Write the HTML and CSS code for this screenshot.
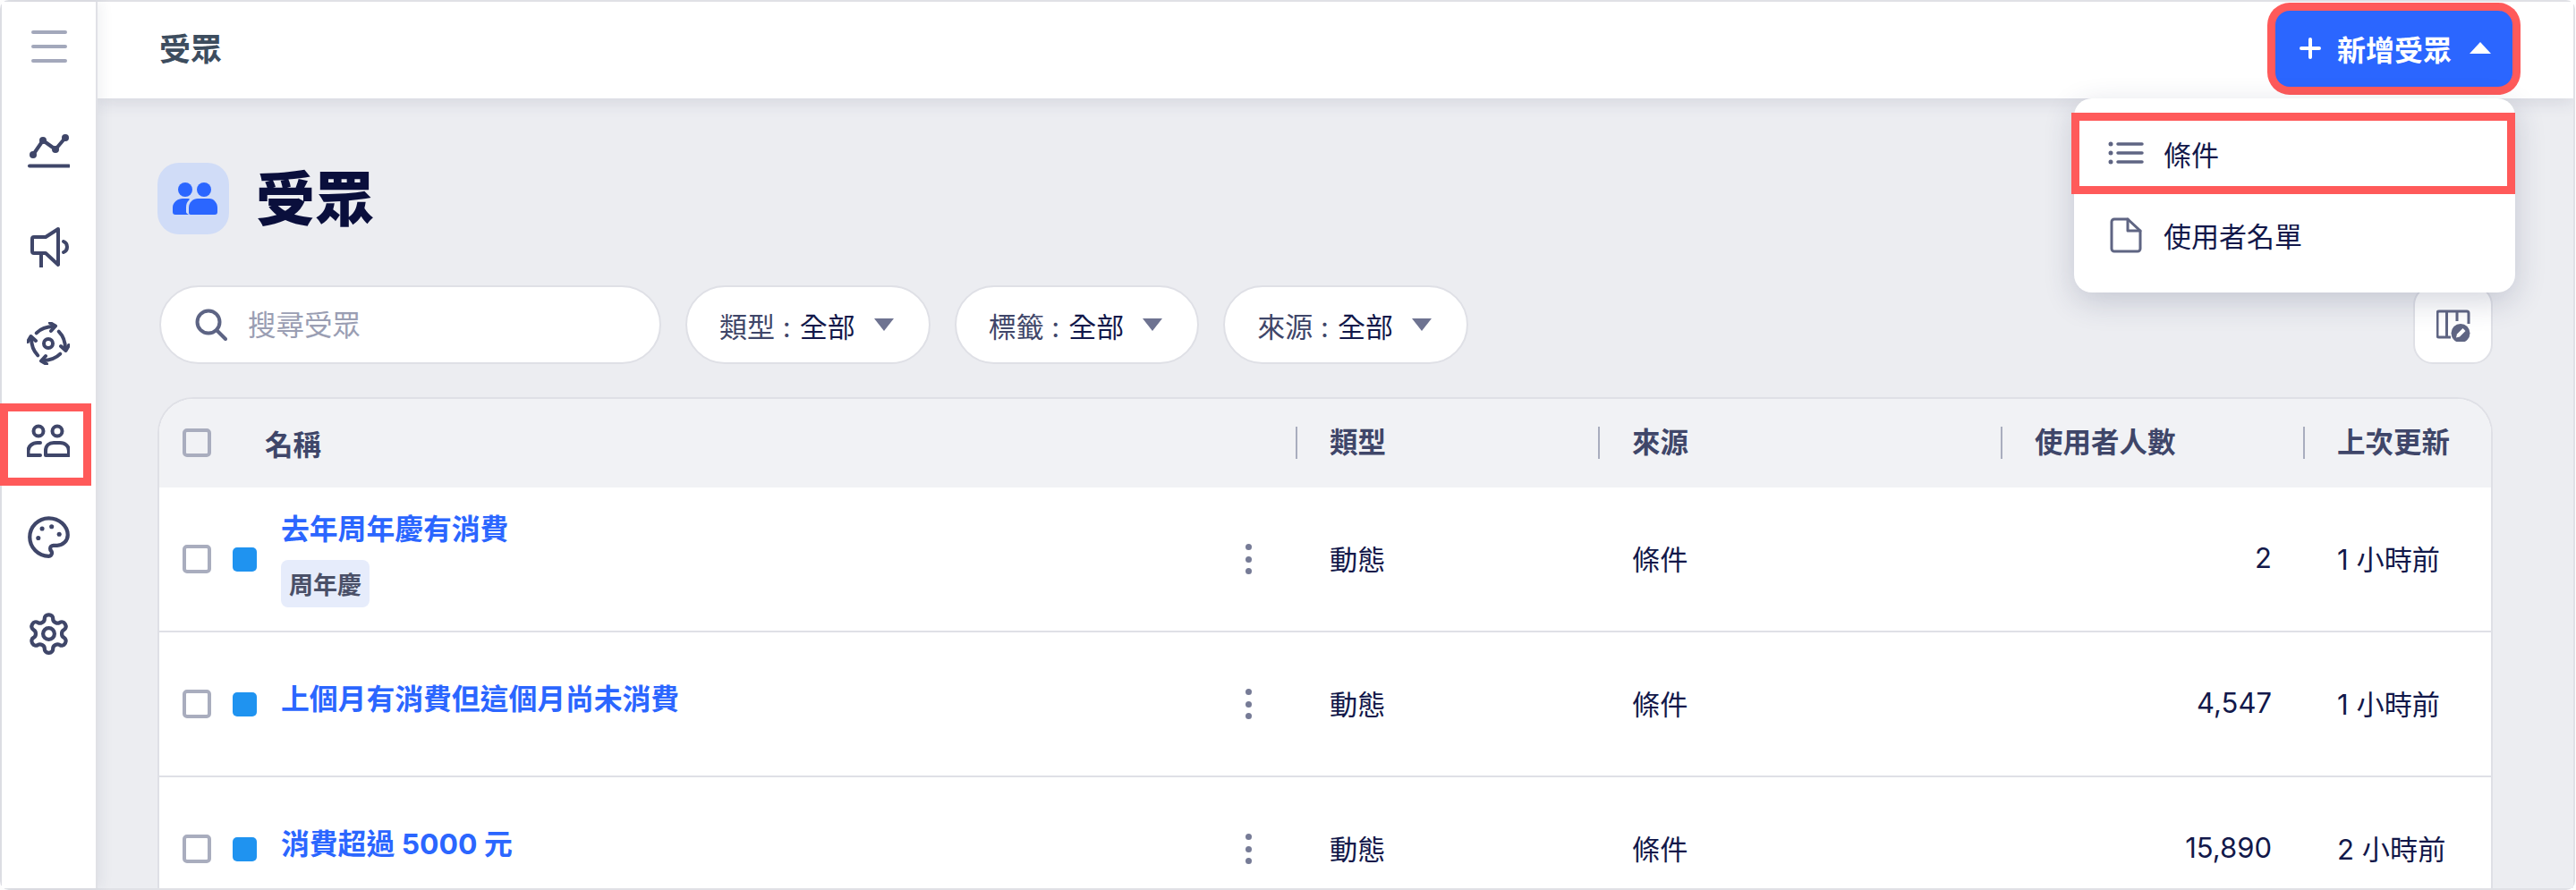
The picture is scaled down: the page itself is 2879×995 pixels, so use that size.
FILE: index.html
```html
<!DOCTYPE html>
<html lang="zh-Hant">
<head>
  <meta charset="UTF-8" />
  <title>受眾</title>
  <link rel="stylesheet" href="styles.css">
</head>
<body>
  <div class="frame">
    <aside class="sidebar">
      <a class="nav-item nav-menu">
        <svg class="nav-icon menu-icon" viewBox="0 0 48 48"><path d="M7 8H43M7 24H43M7 40H43"/></svg>
      </a>
      <a class="nav-item">
        <svg class="nav-icon" viewBox="0 0 48 48">
          <path d="M7 30 18 14 32 24 43 11"/>
          <path d="M3 42.5H47"/>
          <circle class="solid" cx="7" cy="30" r="4"/><circle class="solid" cx="18" cy="14" r="4"/><circle class="solid" cx="32" cy="24" r="4"/><circle class="solid" cx="43" cy="11" r="4"/>
        </svg>
      </a>
      <a class="nav-item">
        <svg class="nav-icon" viewBox="0 0 48 48">
          <path d="M35 5 21 14H8a2 2 0 0 0-2 2V30a2 2 0 0 0 2 2H21L35 45Z"/>
          <path d="M16 33V48"/>
          <path d="M41 19a6.500 6.500 0 0 1 0 12"/>
        </svg>
      </a>
      <a class="nav-item">
        <svg class="nav-icon" viewBox="0 0 48 48">
          <circle cx="24" cy="24" r="5"/>
          <g><path d="M10.700 12.300C16 7 22 5 30 5"/><path d="M26 1 32 4.500 27 10"/></g>
          <g transform="rotate(90 24 24)"><path d="M10.700 12.300C16 7 22 5 30 5"/><path d="M26 1 32 4.500 27 10"/></g>
          <g transform="rotate(180 24 24)"><path d="M10.700 12.300C16 7 22 5 30 5"/><path d="M26 1 32 4.500 27 10"/></g>
          <g transform="rotate(270 24 24)"><path d="M10.700 12.300C16 7 22 5 30 5"/><path d="M26 1 32 4.500 27 10"/></g>
        </svg>
      </a>
      <a class="nav-item marked">
        <svg class="nav-icon" viewBox="0 0 48 48">
          <circle cx="13" cy="14" r="5.5"/><circle cx="34" cy="14" r="5.5"/>
          <path d="M15 27H12C6 27 1.500 31 1.500 36V41H15"/>
          <path d="M21 41V36C21 30 25 27 30 27H37C43 27 47 31 47 36V41Z"/>
        </svg>
      </a>
      <a class="nav-item">
        <svg class="nav-icon wide" viewBox="0 0 24 24">
          <circle class="solid" cx="13.500" cy="6.500" r="1.200"/><circle class="solid" cx="17.500" cy="10.500" r="1.200"/><circle class="solid" cx="8.500" cy="7.500" r="1.200"/><circle class="solid" cx="6.500" cy="12.500" r="1.200"/>
          <path class="thin" d="M12 2C6.500 2 2 6.500 2 12s4.500 10 10 10c.926 0 1.648-.746 1.648-1.688 0-.437-.18-.835-.437-1.125-.29-.289-.438-.652-.438-1.125a1.640 1.640 0 0 1 1.668-1.668h1.996c3.051 0 5.555-2.503 5.555-5.554C21.965 6.012 17.461 2 12 2z"/>
        </svg>
      </a>
      <a class="nav-item">
        <svg class="nav-icon wide" viewBox="0 0 24 24">
          <path class="thin" d="M12.220 2h-.44a2 2 0 0 0-2 2v.18a2 2 0 0 1-1 1.730l-.43.25a2 2 0 0 1-2 0l-.15-.08a2 2 0 0 0-2.730.73l-.22.38a2 2 0 0 0 .73 2.730l.15.1a2 2 0 0 1 1 1.720v.51a2 2 0 0 1-1 1.740l-.15.09a2 2 0 0 0-.73 2.730l.22.38a2 2 0 0 0 2.730.73l.15-.08a2 2 0 0 1 2 0l.43.25a2 2 0 0 1 1 1.730V20a2 2 0 0 0 2 2h.44a2 2 0 0 0 2-2v-.18a2 2 0 0 1 1-1.730l.43-.25a2 2 0 0 1 2 0l.15.08a2 2 0 0 0 2.730-.73l.22-.39a2 2 0 0 0-.73-2.730l-.15-.08a2 2 0 0 1-1-1.740v-.5a2 2 0 0 1 1-1.740l.15-.09a2 2 0 0 0 .73-2.730l-.22-.38a2 2 0 0 0-2.730-.73l-.15.08a2 2 0 0 1-2 0l-.43-.25a2 2 0 0 1-1-1.730V4a2 2 0 0 0-2-2z"/>
          <circle class="thin" cx="12" cy="12" r="3"/>
        </svg>
      </a>
    </aside>

    <div class="main">
      <header class="topbar">
        <div class="topbar-title">受眾</div>
        <div class="add-wrap">
          <button class="add-button">
            <svg class="add-plus" viewBox="0 0 24 24"><path d="M12 2V22M2 12H22"/></svg>
            <span>新增受眾</span>
            <span class="caret-up"></span>
          </button>
          <div class="add-menu">
            <div class="menu-row marked">
              <svg class="menu-row-icon" viewBox="0 0 40 40"><path d="M11 9H38M11 19H38M11 29H38"/><circle class="solid" cx="3" cy="9" r="2.500"/><circle class="solid" cx="3" cy="19" r="2.500"/><circle class="solid" cx="3" cy="29" r="2.500"/></svg>
              <span>條件</span>
            </div>
            <div class="menu-row">
              <svg class="menu-row-icon" viewBox="0 0 40 40"><path class="doc" d="M22 2H7a3 3 0 0 0-3 3V35a3 3 0 0 0 3 3H33a3 3 0 0 0 3-3V15Z"/><path class="doc" d="M22 2V15H36"/></svg>
              <span>使用者名單</span>
            </div>
          </div>
        </div>
      </header>

      <section class="content">
        <div class="page-head">
          <div class="page-icon">
            <svg viewBox="0 0 80 80">
              <circle cx="31" cy="30" r="8"/><circle cx="52" cy="30" r="8"/>
              <path d="M35 58H20a3 3 0 0 1-3-3V50C17 44 23 40 28 40H35C36 40 36 41 35 42 33 44 32 46 32 50V55C32 56 33 57 35 58Z"/>
              <path d="M37 58a2 2 0 0 1-2-2V50C35 44 40 40 45 40H58C63 40 67 45 67 50V55a3 3 0 0 1-3 3Z"/>
            </svg>
          </div>
          <h1 class="page-title">受眾</h1>
        </div>

        <div class="filters">
          <label class="search">
            <svg class="search-icon" viewBox="0 0 36 36"><circle cx="15" cy="15" r="12.500"/><path d="M24 24 34 34"/></svg>
            <input class="search-input" type="text" placeholder="搜尋受眾">
          </label>
          <div class="pill"><span class="pill-label">類型 :</span> <span class="pill-value">全部</span><span class="caret-down"></span></div>
          <div class="pill"><span class="pill-label">標籤 :</span> <span class="pill-value">全部</span><span class="caret-down"></span></div>
          <div class="pill"><span class="pill-label">來源 :</span> <span class="pill-value">全部</span><span class="caret-down"></span></div>
          <button class="column-button">
            <svg viewBox="0 0 38 38">
              <path class="col-line" d="M16 33H3a2 2 0 0 1-2-2V6a2 2 0 0 1 2-2H34a2 2 0 0 1 2 2V18M11.500 4V33M23 4V15"/>
              <circle class="col-badge" cx="27" cy="28.500" r="10.500"/>
              <path class="col-pen" d="M22 33.500 23 29.500 29.500 23 32.500 26 26 32.500Z"/>
            </svg>
          </button>
        </div>

        <div class="table-wrap">
          <table class="audience-table">
            <colgroup>
              <col class="col-name"><col class="col-type"><col class="col-source"><col class="col-users"><col class="col-updated">
            </colgroup>
            <thead>
              <tr>
                <th><div class="name-head"><input class="check" type="checkbox"><span>名稱</span></div></th>
                <th><span class="th-label">類型</span></th>
                <th><span class="th-label">來源</span></th>
                <th><span class="th-label">使用者人數</span></th>
                <th><span class="th-label">上次更新</span></th>
              </tr>
            </thead>
            <tbody>
              <tr>
                <td>
                  <div class="name-cell">
                    <input class="check" type="checkbox">
                    <span class="swatch"></span>
                    <div class="name-block">
                      <a class="name-link">去年周年慶有消費</a>
                      <span class="tag">周年慶</span>
                    </div>
                    <span class="more"><i></i><i></i><i></i></span>
                  </div>
                </td>
                <td class="cell">動態</td>
                <td class="cell">條件</td>
                <td class="cell cell-num">2</td>
                <td class="cell">1 小時前</td>
              </tr>
              <tr>
                <td>
                  <div class="name-cell">
                    <input class="check" type="checkbox">
                    <span class="swatch"></span>
                    <div class="name-block no-tag">
                      <a class="name-link">上個月有消費但這個月尚未消費</a>
                    </div>
                    <span class="more"><i></i><i></i><i></i></span>
                  </div>
                </td>
                <td class="cell">動態</td>
                <td class="cell">條件</td>
                <td class="cell cell-num">4,547</td>
                <td class="cell">1 小時前</td>
              </tr>
              <tr>
                <td>
                  <div class="name-cell">
                    <input class="check" type="checkbox">
                    <span class="swatch"></span>
                    <div class="name-block no-tag">
                      <a class="name-link">消費超過 5000 元</a>
                    </div>
                    <span class="more"><i></i><i></i><i></i></span>
                  </div>
                </td>
                <td class="cell">動態</td>
                <td class="cell">條件</td>
                <td class="cell cell-num">15,890</td>
                <td class="cell">2 小時前</td>
              </tr>
            </tbody>
          </table>
        </div>
      </section>
    </div>
  </div>
</body>
</html>
```

FILE: styles.css
```css
* {
  box-sizing: border-box;
}

body {
  margin: 0;
  background: #fff;
  font-family: Inter, "Noto Sans CJK TC", sans-serif;
  font-size: 30px;
  color: #12184a;
  overflow: hidden;
}

.frame {
  display: flex;
  width: 2878px;
  height: 995px;
  border: 2px solid #e0e1e6;
  border-radius: 10px;
}

/* sidebar */
.sidebar {
  position: relative;
  z-index: 2;
  flex: none;
  width: 107px;
  padding-top: 5px;
  display: flex;
  flex-direction: column;
  gap: 18.400px;
  background: #fff;
  border-right: 2px solid #e0e1e6;
  box-shadow: 4px 0 14px rgba(40, 50, 90, 0.07);
}

.nav-item {
  width: 102px;
  height: 90px;
  margin-left: -2px;
  flex: none;
  display: flex;
  align-items: center;
  justify-content: center;
  padding-left: 6px;
}

.nav-menu {
  margin-bottom: 6.600px;
}

/* the red frame sits lower than the icon it marks */
.nav-item.marked {
  height: 92px;
  margin-top: 4px;
  margin-bottom: -6px;
  padding-bottom: 10px;
  box-shadow: inset 0 0 0 9px #ff5a5a;
}

.nav-icon {
  width: 48px;
  height: 48px;
  fill: none;
  stroke: #3f4669;
  stroke-width: 4;
  stroke-linecap: round;
  stroke-linejoin: round;
}

.nav-icon.wide {
  width: 51px;
  height: 51px;
}

.nav-icon .solid {
  fill: #3f4669;
  stroke: none;
}

.nav-icon .thin {
  stroke-width: 2;
}

.menu-icon {
  stroke: #a3a8bb;
}

/* top bar */
.main {
  flex: 1;
  min-width: 0;
  display: flex;
  flex-direction: column;
  overflow: hidden;
  background: #ecedf1;
}

.topbar {
  position: relative;
  z-index: 1;
  flex: none;
  height: 108px;
  padding: 0 68px 4px 69px;
  display: flex;
  justify-content: space-between;
  align-items: center;
  background: #fff;
  box-shadow: 0 4px 18px rgba(40, 50, 90, 0.12);
}

.topbar-title {
  margin-top: -3px;
  font-size: 35px;
  font-weight: 700;
  color: #3d4d5e;
}

.add-wrap {
  position: relative;
  margin-top: 1px;
}

.add-button {
  width: 265px;
  height: 85px;
  padding: 0 24px 2px 27px;
  display: flex;
  align-items: center;
  border: none;
  border-radius: 16px;
  background: #2b66ff;
  box-shadow: 0 0 0 9px #ff5a5a;
  color: #fff;
  font: 700 32px Inter, "Noto Sans CJK TC", sans-serif;
}

.add-plus {
  width: 24px;
  height: 24px;
  margin-right: 18px;
  fill: none;
  stroke: #fff;
  stroke-width: 4;
  stroke-linecap: round;
}

.caret-up {
  margin-left: 20px;
  border-left: 12px solid transparent;
  border-right: 12px solid transparent;
  border-bottom: 13px solid #fff;
}

.add-menu {
  position: absolute;
  top: 98px;
  right: -3px;
  width: 493px;
  height: 217px;
  padding-top: 16px;
  border-radius: 20px;
  background: #fff;
  box-shadow: 0 10px 34px rgba(40, 50, 90, 0.2);
}

.menu-row {
  height: 91px;
  padding-left: 38px;
  display: flex;
  align-items: center;
  gap: 22px;
  font-size: 31px;
}

.menu-row.marked {
  margin-left: -3px;
  padding-left: 41px;
  box-shadow: inset 0 0 0 9px #ff5a5a;
}

.menu-row-icon {
  width: 40px;
  height: 40px;
  fill: none;
  stroke: #5f6583;
  stroke-width: 3.500;
  stroke-linecap: round;
  stroke-linejoin: round;
}

.menu-row-icon .solid {
  fill: #5f6583;
  stroke: none;
}

.menu-row-icon .doc {
  stroke-width: 3;
}

/* page */
.content {
  padding: 72px 90px 0 67px;
}

.page-head {
  height: 80px;
  display: flex;
  align-items: flex-start;
  gap: 30px;
}

.page-icon {
  width: 80px;
  height: 80px;
  border-radius: 24px;
  background: #d0dcf7;
}

.page-icon svg {
  display: block;
  fill: #2b66ff;
}

.page-title {
  margin: 0;
  font-size: 66px;
  line-height: 82px;
  font-weight: 900;
  color: #0a0f3c;
}

.filters {
  margin-top: 57px;
  margin-left: 2px;
  display: flex;
  align-items: center;
  gap: 27px;
}

.search {
  width: 561px;
  height: 88px;
  padding: 0 32px 0 38px;
  display: flex;
  align-items: center;
  gap: 23px;
  border: 2px solid #dfe0e6;
  border-radius: 44px;
  background: #fff;
}

.search-icon {
  flex: none;
  width: 36px;
  height: 36px;
  fill: none;
  stroke: #5d6484;
  stroke-width: 4;
  stroke-linecap: round;
}

.search-input {
  flex: 1;
  min-width: 0;
  border: none;
  outline: none;
  padding: 0;
  font: 31.500px Inter, "Noto Sans CJK TC", sans-serif;
}

.search-input::placeholder {
  color: #9a9eb3;
  opacity: 1;
}

.pill {
  height: 88px;
  padding: 0 39px 0 36px;
  display: flex;
  align-items: center;
  gap: 10px;
  border: 2px solid #dfe0e6;
  border-radius: 44px;
  background: #fff;
  font-size: 31px;
  white-space: pre;
}

.pill-label {
  color: #3f4669;
}

.pill-value {
  color: #12184a;
}

.caret-down {
  margin-left: 11px;
  border-left: 11px solid transparent;
  border-right: 11px solid transparent;
  border-top: 14px solid #6e7391;
}

.column-button {
  width: 89px;
  height: 88px;
  margin-left: auto;
  padding: 0;
  display: flex;
  align-items: center;
  justify-content: center;
  border: 2px solid #dfe0e6;
  border-radius: 22px;
  background: #fff;
}

.column-button svg {
  width: 38px;
  height: 38px;
}

.col-line {
  fill: none;
  stroke: #5f6583;
  stroke-width: 3;
}

.col-badge {
  fill: #5f6583;
}

.col-pen {
  fill: #fff;
}

/* table */
.table-wrap {
  margin-top: 37px;
  border: 2px solid #dfe0e6;
  border-bottom: none;
  border-radius: 40px 40px 0 0;
  overflow: hidden;
  background: #fff;
}

.audience-table {
  width: 100%;
  table-layout: fixed;
  border-collapse: separate;
  border-spacing: 0;
}

.col-name { width: 1270px; }
.col-type { width: 338px; }
.col-source { width: 450px; }
.col-users { width: 338px; }

.audience-table th {
  height: 99px;
  padding: 0 0 2px;
  background: #f1f2f5;
  text-align: left;
  font-size: 31.500px;
  font-weight: 700;
  color: #3f4669;
}

.name-head {
  display: flex;
  align-items: center;
  gap: 60px;
  padding-left: 26px;
}

.th-label {
  display: block;
  padding-left: 36px;
  border-left: 2px solid #a9adbe;
  line-height: 36px;
}

.audience-table td {
  height: 162px;
  padding: 0;
  border-bottom: 2px solid #dfe0e6;
}

.audience-table .cell {
  padding: 0 0 3px 38px;
  font-size: 31.200px;
}

.audience-table .cell-num {
  padding: 0 35px 3px 0;
  text-align: right;
  font-size: 31px;
}

.check {
  appearance: none;
  flex: none;
  width: 32px;
  height: 32px;
  margin: 0;
  border: 4px solid #a9adbe;
  border-radius: 5px;
  background: transparent;
}

.name-cell {
  display: flex;
  align-items: center;
  padding: 0 49px 0 26px;
}

.swatch {
  flex: none;
  width: 27px;
  height: 27px;
  margin-left: 24px;
  border-radius: 5px;
  background: #1f93f0;
}

.name-block {
  flex: 1;
  margin-left: 27px;
  display: flex;
  flex-direction: column;
  align-items: flex-start;
  gap: 14px;
}

.name-block.no-tag {
  padding-bottom: 10px;
}

.name-link {
  font-size: 31.800px;
  line-height: 40px;
  font-weight: 700;
  color: #2b66ff;
}

.tag {
  height: 53px;
  padding: 0 9px;
  display: flex;
  align-items: center;
  border-radius: 8px;
  background: #e6ecfb;
  font-size: 27px;
  font-weight: 700;
  color: #4a5068;
}

.more {
  display: flex;
  flex-direction: column;
  gap: 6.500px;
}

.more i {
  width: 7px;
  height: 7px;
  border-radius: 50%;
  background: #767b96;
}
```
